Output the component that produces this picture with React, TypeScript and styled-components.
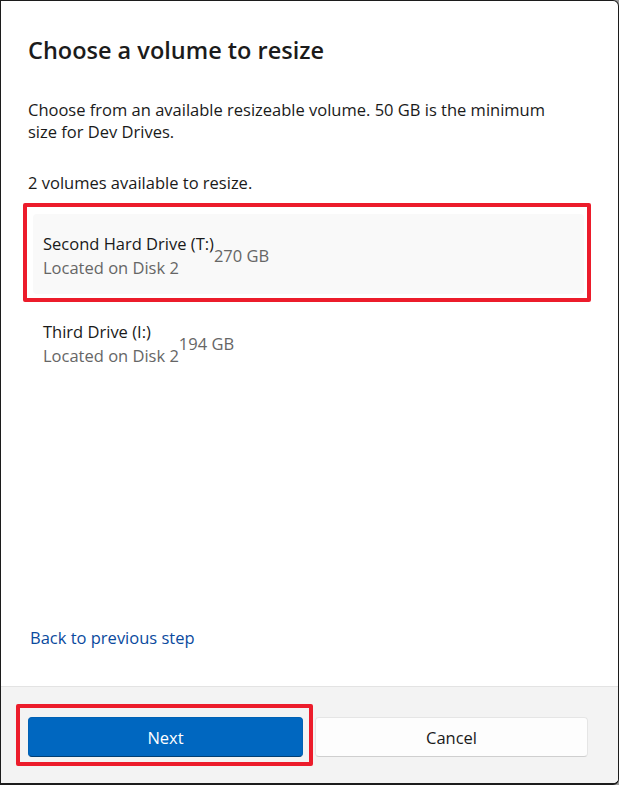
import React from 'react';
import styled, { createGlobalStyle } from 'styled-components';

const GlobalStyle = createGlobalStyle`
  html, body {
    margin: 0;
    padding: 0;
    background: #9a9a9a;
  }
  * {
    box-sizing: border-box;
  }
`;

const FONT = `"Segoe UI", "Open Sans", "Noto Sans", sans-serif`;

interface Volume {
  name: string;
  location: string;
  size: string;
}

const volumes: Volume[] = [
  { name: 'Second Hard Drive (T:)', location: 'Located on Disk 2', size: '270 GB' },
  { name: 'Third Drive (I:)', location: 'Located on Disk 2', size: '194 GB' },
];

const Window = styled.div`
  width: 619px;
  height: 785px;
  display: flex;
  flex-direction: column;
  background: #ffffff;
  border: 1px solid #1c1c1c;
  border-bottom-width: 2px;
  border-top-right-radius: 6px;
  border-bottom-right-radius: 6px;
  overflow: hidden;
  font-family: ${FONT};
  color: #1a1a1a;
`;

const Content = styled.div`
  flex: 1;
  display: flex;
  flex-direction: column;
  padding: 31px 30px 37px 27px;
`;

const Title = styled.h1`
  margin: 0;
  font-size: 23.5px;
  line-height: 36px;
  font-weight: 600;
  color: #1b1b1b;
`;

const Text = styled.p<{ $gap?: number }>`
  margin: ${(p) => p.$gap ?? 0}px 0 0;
  font-size: 16.5px;
  line-height: 22px;
  color: #1a1a1a;
`;

const VolumeList = styled.div`
  display: flex;
  flex-direction: column;
  margin: 9px -3px 0 -5px;
`;

const Highlight = styled.div<{ $pad: string }>`
  border: 4px solid #ec1c2b;
  border-radius: 2px;
  padding: ${(p) => p.$pad};
`;

const VolumeRow = styled.div<{ $selected?: boolean }>`
  height: 80px;
  display: flex;
  align-items: center;
  padding: 4px 10px 0;
  margin-left: ${(p) => (p.$selected ? 0 : 10)}px;
  border-radius: 4px;
  background: ${(p) => (p.$selected ? '#f9f9f9' : 'transparent')};
`;

const VolumeText = styled.div`
  display: flex;
  flex-direction: column;
  font-size: 16.5px;
  line-height: 24px;
`;

const VolumeName = styled.span`
  color: #1a1a1a;
`;

const VolumeLocation = styled.span`
  color: #666666;
`;

const VolumeSize = styled.span`
  font-size: 16.5px;
  line-height: 24px;
  color: #666666;
`;

const BackLink = styled.a`
  margin-top: auto;
  margin-left: 2px;
  font-size: 16.5px;
  line-height: 22px;
  color: #0a4a9e;
  text-decoration: none;
  cursor: pointer;
`;

const Footer = styled.div`
  height: 97px;
  display: flex;
  align-items: flex-start;
  padding: 17px 30px 0 15px;
  background: #f3f3f3;
  border-top: 1px solid #e3e3e3;
`;

const ButtonBase = styled.button`
  height: 40px;
  border-radius: 4px;
  font-family: ${FONT};
  font-size: 16.5px;
  cursor: pointer;
`;

const PrimaryButton = styled(ButtonBase)`
  width: 275px;
  display: block;
  background: #0067c0;
  color: #ffffff;
  border: 1px solid #0061b4;
  border-bottom-color: #003e73;
`;

const SecondaryButton = styled(ButtonBase)`
  flex: 1;
  margin: 13px 0 0 2px;
  background: #fdfdfd;
  color: #1a1a1a;
  border: 1px solid #e5e5e5;
  border-bottom-color: #cfcfcf;
`;

export default function App() {
  const [selected, other] = volumes;

  const renderRow = (v: Volume, isSelected: boolean) => (
    <VolumeRow $selected={isSelected}>
      <VolumeText>
        <VolumeName>{v.name}</VolumeName>
        <VolumeLocation>{v.location}</VolumeLocation>
      </VolumeText>
      <VolumeSize>{v.size}</VolumeSize>
    </VolumeRow>
  );

  return (
    <>
      <GlobalStyle />
      <Window>
        <Content>
          <Title>Choose a volume to resize</Title>
          <Text $gap={31}>
            Choose from an available resizeable volume. 50 GB is the minimum
            <br />
            size for Dev Drives.
          </Text>
          <Text $gap={29}>2 volumes available to resize.</Text>
          <VolumeList>
            <Highlight $pad="7px 3px 4px 6px">{renderRow(selected, true)}</Highlight>
            {renderRow(other, false)}
          </VolumeList>
          <BackLink>Back to previous step</BackLink>
        </Content>
        <Footer>
          <Highlight $pad="9px 6px 5px 8px">
            <PrimaryButton>Next</PrimaryButton>
          </Highlight>
          <SecondaryButton>Cancel</SecondaryButton>
        </Footer>
      </Window>
    </>
  );
}
